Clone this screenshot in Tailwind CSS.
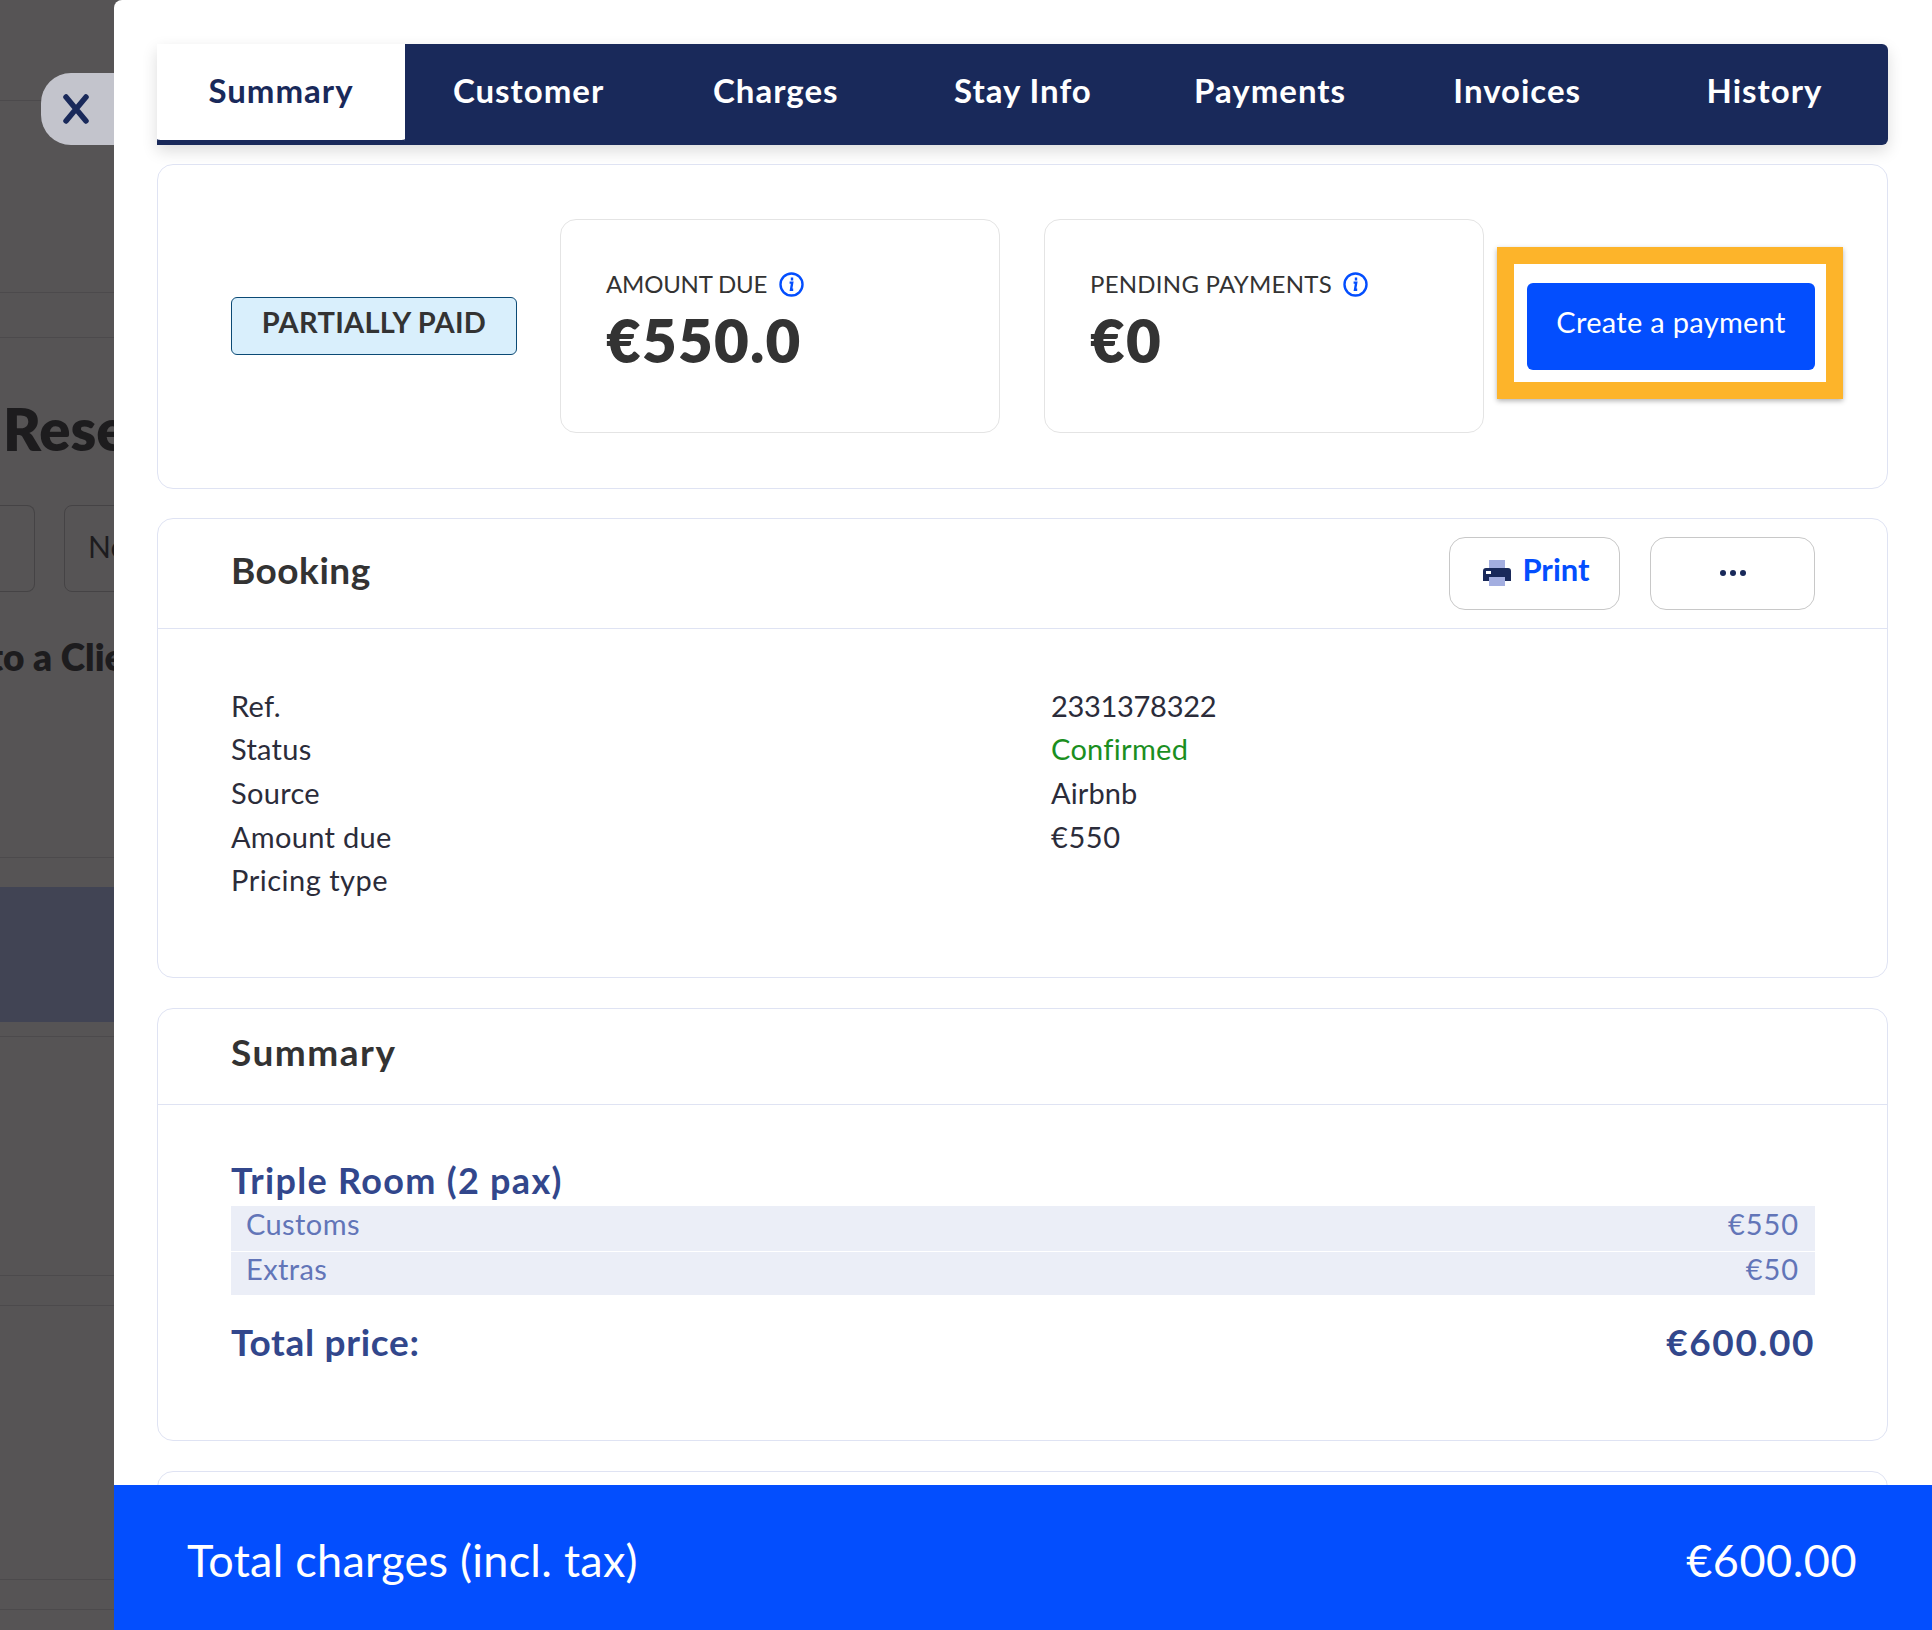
<!DOCTYPE html>
<html lang="en">
<head>
  <meta charset="UTF-8" />
  <title>Reservation summary</title>
  <script src="https://cdn.jsdelivr.net/npm/@tailwindcss/browser@4"></script>
</head>
<body class="w-[1932px] h-[1630px] overflow-hidden bg-[#565455] font-[family-name:Lato,sans-serif]">
  <div class="relative flex h-full">

    <!-- dimmed page behind the drawer -->
    <aside class="w-[114px] h-full shrink-0 overflow-hidden text-[#1d1c1e]">
      <div class="h-[101px] border-b border-[#4c4a4c]"></div>
      <div class="h-[192px] border-b border-[#4c4a4c]"></div>
      <div class="h-[45px] border-b border-[#4c4a4c]"></div>
      <div class="h-[167px] pl-[3px] pt-[62px] text-[58px] leading-[58px] font-extrabold whitespace-nowrap">Rese</div>
      <div class="h-[87px] flex gap-[29px]">
        <div class="w-[35px] h-[87px] shrink-0 border border-l-0 border-[#454345] rounded-r-lg"></div>
        <div class="w-[100px] h-[87px] shrink-0 border border-[#454345] rounded-lg pl-[23px] pt-[20px] text-[30px] leading-[40px]">No</div>
      </div>
      <div class="h-[266px] border-b border-[#4c4a4c] -ml-[11px] pt-[43px] text-[37px] leading-[44px] font-extrabold whitespace-nowrap">to a Clie</div>
      <div class="h-[29px]"></div>
      <div class="h-[135px] bg-[#414454]"></div>
      <div class="h-[15px] border-b border-[#4c4a4c]"></div>
      <div class="h-[239px] border-b border-[#4c4a4c]"></div>
      <div class="h-[30px] border-b border-[#4c4a4c]"></div>
      <div class="h-[274px] border-b border-[#4c4a4c]"></div>
      <div class="h-[30px] border-b border-[#4c4a4c]"></div>
    </aside>

    <!-- close handle -->
    <button class="absolute left-[41px] top-[73px] w-[73px] h-[72px] rounded-l-[30px] bg-[#c3c4cc] flex items-center pl-[21px]">
      <svg width="30" height="30" viewBox="0 0 30 30" fill="none" stroke="#19295a" stroke-width="5.5" stroke-linecap="round"><path d="M4 3l20 24M24 3L4 27"/></svg>
    </button>

    <!-- drawer -->
    <main class="flex-1 h-full flex flex-col bg-white rounded-tl-lg overflow-hidden">
      <div class="flex-1 min-h-0 overflow-hidden pt-[44px] pl-[43px] pr-[44px]">

        <nav class="grid grid-cols-[248px_repeat(6,1fr)] h-[101px] bg-[#19295a] rounded-r-md shadow-[0_6px_16px_rgba(0,0,0,0.14)] text-[33px] tracking-[1px] font-bold text-white">
          <a class="flex items-center justify-center pb-[3px] bg-white text-[#19295a] border-b-[5px] border-[#19295a] rounded-b-md">Summary</a>
          <a class="flex items-center justify-center pb-[8px]">Customer</a>
          <a class="flex items-center justify-center pb-[8px]">Charges</a>
          <a class="flex items-center justify-center pb-[8px]">Stay Info</a>
          <a class="flex items-center justify-center pb-[8px]">Payments</a>
          <a class="flex items-center justify-center pb-[8px]">Invoices</a>
          <a class="flex items-center justify-center pb-[8px]">History</a>
        </nav>

        <!-- balance -->
        <section class="mt-[19px] h-[325px] border border-[#dfe3f3] rounded-2xl flex items-center pl-[73px]">
          <div class="w-[286px] h-[58px] shrink-0 mb-[1px] bg-[#d9effc] border border-[#0b4a75] rounded-md flex items-center justify-center pb-[9px] text-[29px] tracking-[0.3px] font-bold text-[#333]">PARTIALLY PAID</div>

          <div class="ml-[43px] w-[440px] h-[214px] shrink-0 mb-[1px] border border-[#e4e4e4] rounded-2xl pl-[45px] pt-[48px]">
            <div class="flex items-center gap-[12px] text-[24px] leading-[32px] tracking-[-0.2px] text-[#333]">
              AMOUNT DUE
              <svg width="25" height="25" viewBox="0 0 25 25" fill="none" stroke="#034efe"><circle cx="12.5" cy="12.5" r="11" stroke-width="2.4"/><path d="M10.6 10.6h2.6l-1.2 7.2h2.2M13 5.6v2.8" stroke-width="2.4"/></svg>
            </div>
            <div class="mt-[5px] text-[60px] leading-[70px] tracking-[1.2px] font-extrabold text-[#333]">€550.0</div>
          </div>

          <div class="ml-[44px] w-[440px] h-[214px] shrink-0 mb-[1px] border border-[#e4e4e4] rounded-2xl pl-[45px] pt-[48px]">
            <div class="flex items-center gap-[11px] text-[24px] leading-[32px] tracking-[0.25px] text-[#333]">
              PENDING PAYMENTS
              <svg width="25" height="25" viewBox="0 0 25 25" fill="none" stroke="#034efe"><circle cx="12.5" cy="12.5" r="11" stroke-width="2.4"/><path d="M10.6 10.6h2.6l-1.2 7.2h2.2M13 5.6v2.8" stroke-width="2.4"/></svg>
            </div>
            <div class="mt-[5px] text-[60px] leading-[70px] tracking-[1.2px] font-extrabold text-[#333]">€0</div>
          </div>

          <div class="ml-[13px] mb-[8px] w-[346px] h-[152px] shrink-0 border-[17px] border-[#fdb42a] shadow-[0_2px_5px_rgba(0,0,0,0.3)] flex items-center pl-[13px] pt-[8px]">
            <button class="w-[288px] h-[87px] bg-[#034efe] rounded-md pb-[9px] text-[29px] tracking-[0.3px] text-white">Create a payment</button>
          </div>
        </section>

        <!-- booking -->
        <section class="mt-[29px] h-[460px] border border-[#dfe3f3] rounded-2xl">
          <header class="h-[110px] border-b border-[#dfe3f3] flex items-center justify-between pl-[73px] pr-[72px]">
            <h2 class="text-[37px] tracking-[0.5px] font-bold text-[#333] pb-[8px]">Booking</h2>
            <div class="flex gap-[30px] pb-[1px]">
              <button class="w-[171px] h-[73px] border border-[#c8c8c8] rounded-2xl flex items-center justify-center gap-[11px] pl-[4px]">
                <svg width="28" height="28" viewBox="0 0 28 28"><path fill="#a3aee0" d="M6 1h16v9H6zM6 18h16v9H6z"/><path fill="#19295a" d="M3 9h22a3 3 0 0 1 3 3v10h-6v-4H6v4H0V12a3 3 0 0 1 3-3z"/><rect x="3" y="12" width="5" height="3" fill="#fff"/></svg>
                <span class="text-[31px] font-bold text-[#034efe] pb-[7px]">Print</span>
              </button>
              <button class="w-[165px] h-[73px] border border-[#c8c8c8] rounded-2xl flex items-center justify-center gap-[4px]">
                <span class="w-[6px] h-[6px] rounded-full bg-[#19295a]"></span>
                <span class="w-[6px] h-[6px] rounded-full bg-[#19295a]"></span>
                <span class="w-[6px] h-[6px] rounded-full bg-[#19295a]"></span>
              </button>
            </div>
          </header>
          <dl class="pt-[55px] pl-[73px] grid grid-cols-[820px_1fr] auto-rows-[43.6px] items-center text-[29px] tracking-[0.3px] text-[#2b2c3a]">
            <dt>Ref.</dt><dd class="tracking-[-0.3px]">2331378322</dd>
            <dt class="-mt-[1px]">Status</dt><dd class="-mt-[1px] text-[#1b8f1f]">Confirmed</dd>
            <dt>Source</dt><dd class="tracking-[0.1px]">Airbnb</dd>
            <dt>Amount due</dt><dd class="tracking-[0.6px]">€550</dd>
            <dt class="tracking-[0.5px]">Pricing type</dt><dd></dd>
          </dl>
        </section>

        <!-- summary -->
        <section class="mt-[30px] h-[433px] border border-[#dfe3f3] rounded-2xl">
          <header class="h-[96px] border-b border-[#dfe3f3] flex items-center pl-[73px]">
            <h2 class="text-[37px] tracking-[1.5px] font-bold text-[#333] pb-[10px]">Summary</h2>
          </header>
          <div class="pl-[73px] pr-[72px]">
            <h3 class="h-[101px] pt-[50px] text-[36px] leading-[50px] tracking-[1.3px] font-bold text-[#32478c]">Triple Room (2 pax)</h3>
            <div class="h-[45px] mb-[1px] bg-[#ebeef7] flex items-center justify-between pl-[15px] pr-[16px] pb-[10px] text-[29px] tracking-[0.4px] text-[#6275b8]"><span>Customs</span><span class="tracking-[0.9px]">€550</span></div>
            <div class="h-[43px] bg-[#ebeef7] flex items-center justify-between pl-[15px] pr-[16px] pb-[9px] text-[29px] tracking-[0.4px] text-[#6275b8]"><span>Extras</span><span class="tracking-[0.9px]">€50</span></div>
            <div class="mt-[23px] flex items-center justify-between text-[37px] leading-[48px] font-bold text-[#32478c]"><span class="tracking-[0.7px]">Total price:</span><span class="tracking-[1.6px]">€600.00</span></div>
          </div>
        </section>

        <section class="mt-[30px] h-[60px] border border-[#dfe3f3] rounded-t-2xl"></section>
      </div>

      <footer class="h-[145px] shrink-0 bg-[#034efe] flex items-center justify-between pl-[73px] pr-[75px] pt-[7px] text-[45px] text-white">
        <span class="tracking-[0.25px]">Total charges (incl. tax)</span>
        <span class="tracking-[0.5px]">€600.00</span>
      </footer>
    </main>
  </div>
</body>
</html>
